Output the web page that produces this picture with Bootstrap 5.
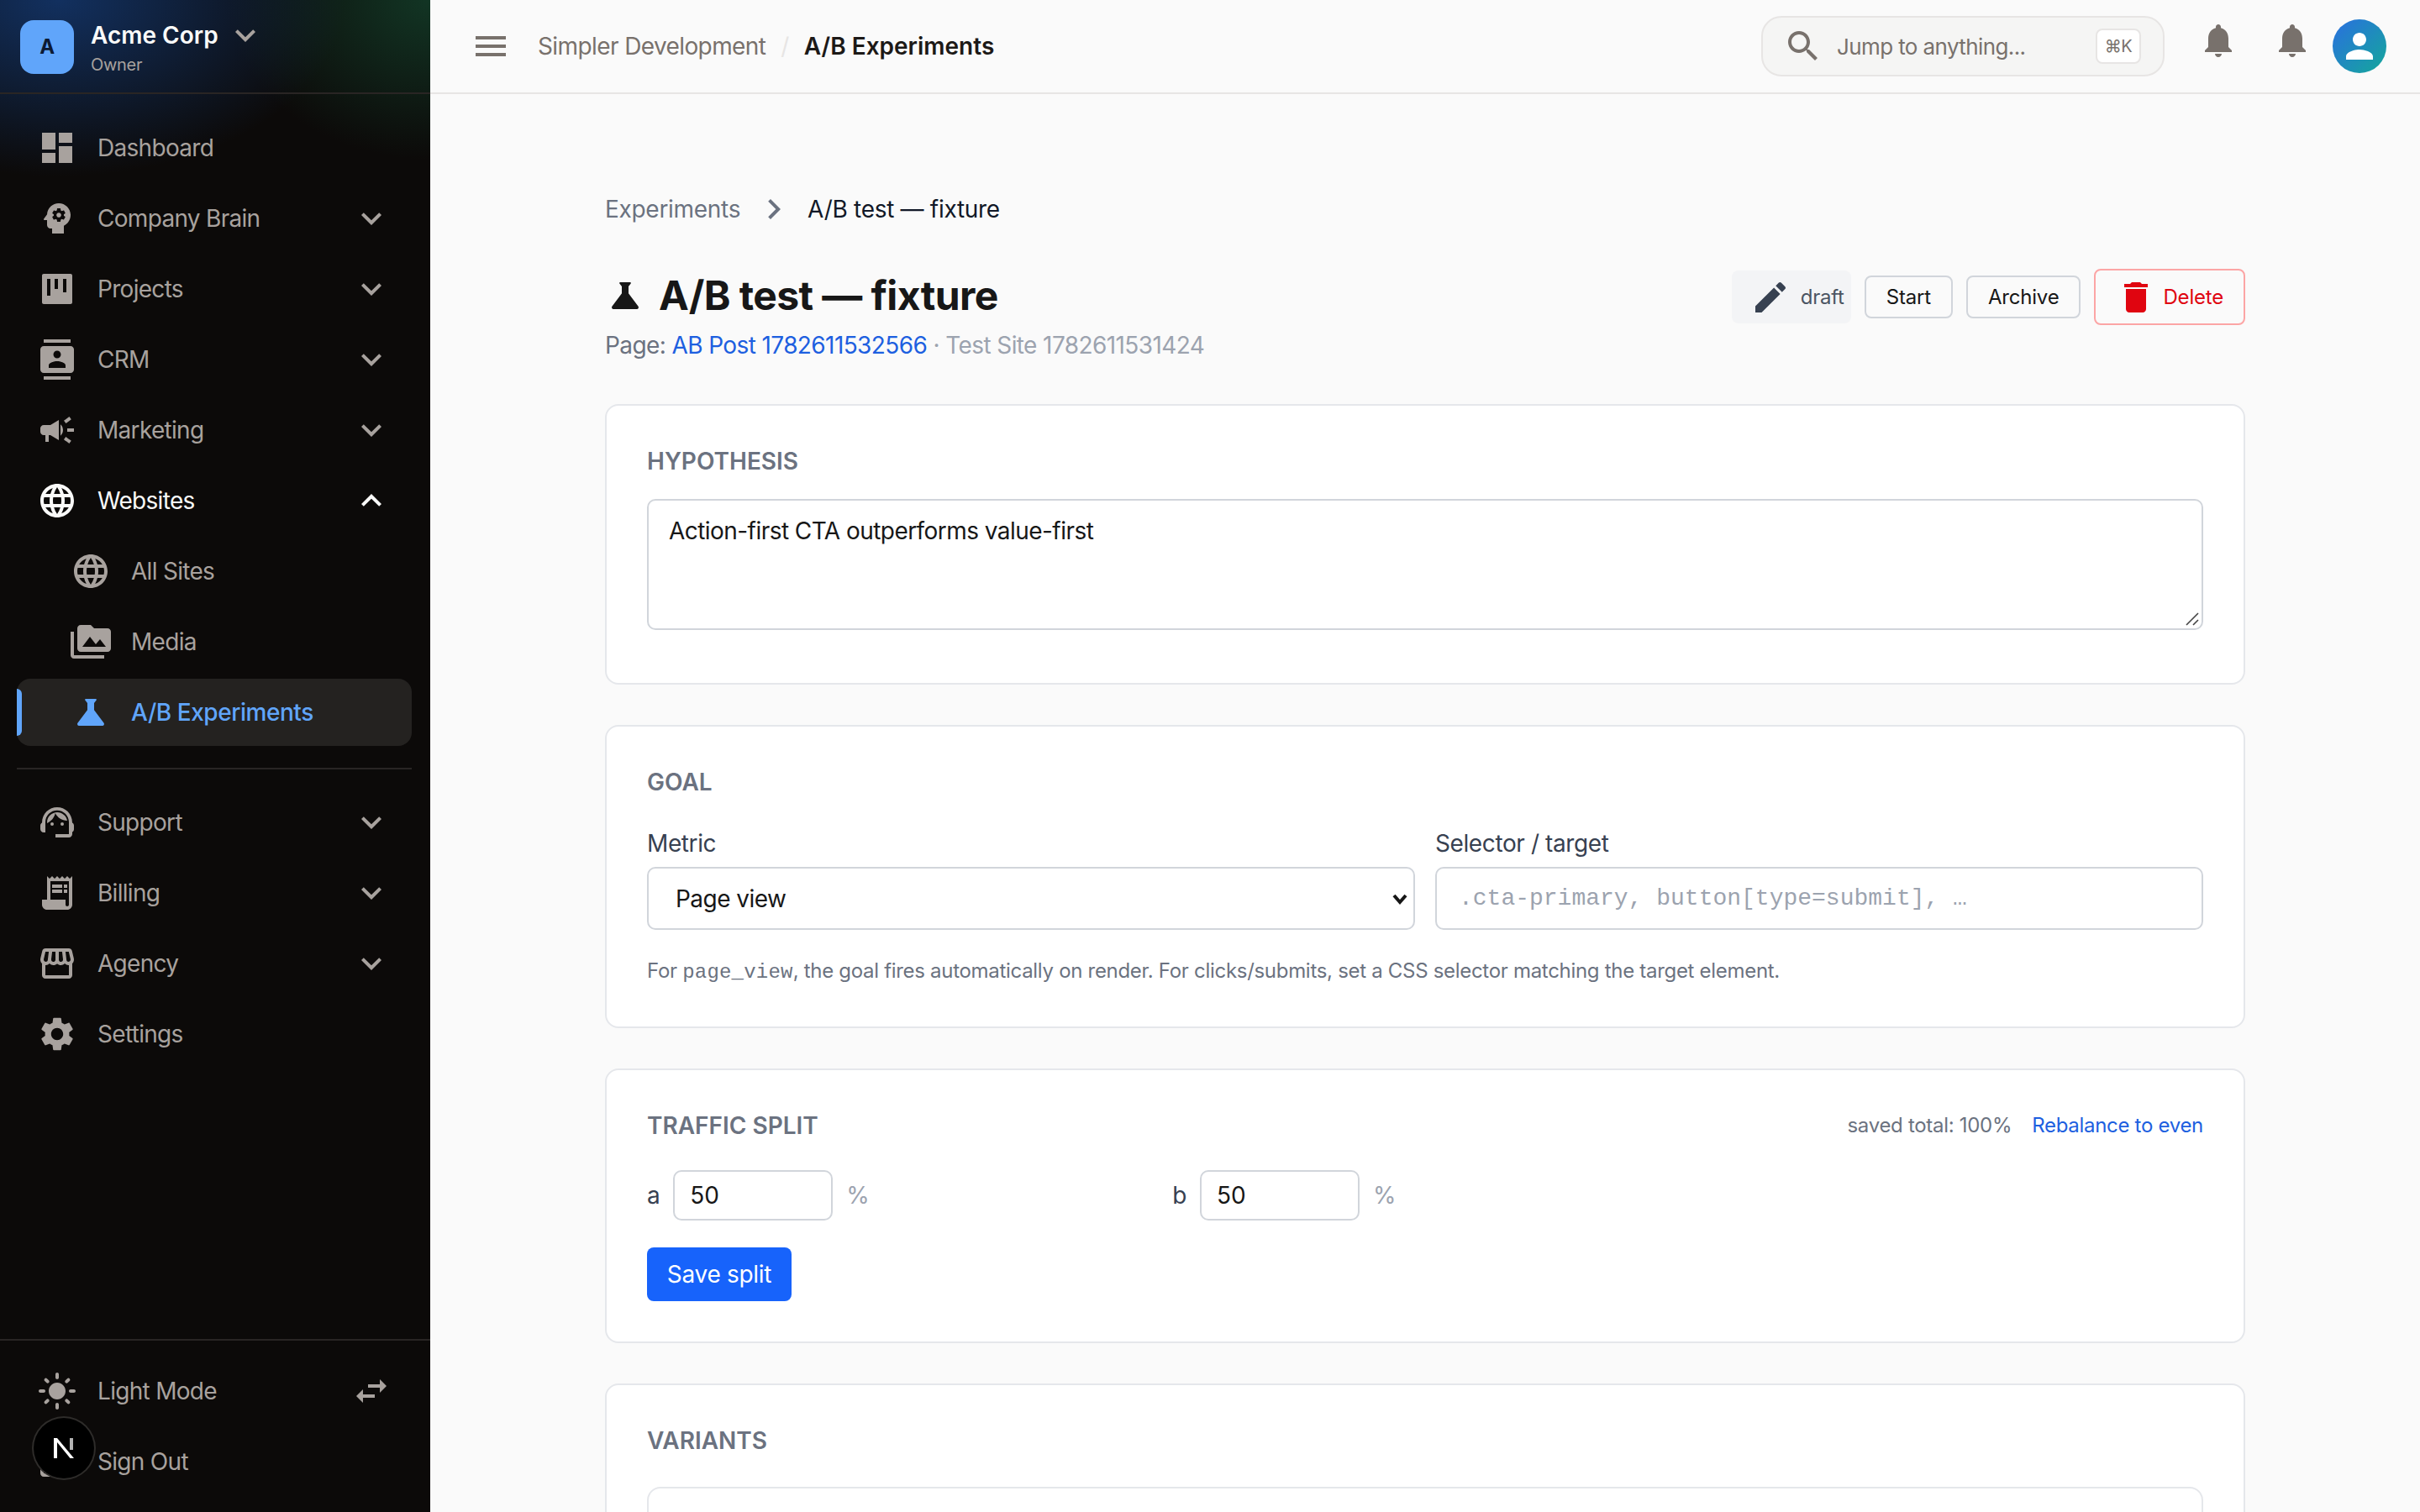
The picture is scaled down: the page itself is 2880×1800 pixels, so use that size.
<!DOCTYPE html>
<html lang="en">
<head>
    <meta charset="UTF-8">
    <meta name="viewport" content="width=device-width, initial-scale=1.0">
    <title>A/B Experiments</title>
    <link href="https://cdn.jsdelivr.net/npm/bootstrap@5.3.0/dist/css/bootstrap.min.css" rel="stylesheet">
    <style>
        html, body { height: 100%; }
        body { font-family: Inter, "Liberation Sans", sans-serif; font-size: 28px; letter-spacing: -.6px; background: #fafafa; color: #1c1917; overflow: hidden; }
        .ico { width: 48px; height: 48px; fill: currentColor; flex: none; }

        /* sidebar */
        .side { width: 512px; height: 1800px; flex: none; color: #a8a29e; position: relative;
            background: radial-gradient(ellipse 340px 210px at 70px 0, #12305f 0%, rgba(18,48,95,0) 100%), radial-gradient(ellipse 240px 190px at 512px 0, #123524 0%, rgba(18,53,36,0) 100%), #0c0a09; }
        .side-head { height: 112px; padding: 24px 24px 0; gap: 20px; border-bottom: 2px solid #292524; }
        .org-text { margin-top: -6px; }
        .org-mark { width: 64px; height: 64px; border-radius: 16px; background: #60a5fa; color: #0c1a33; font-size: 24px; font-weight: 700; }
        .org-name { font-size: 28px; font-weight: 600; color: #fafaf9; line-height: 36px; letter-spacing: 0; }
        .org-role { font-size: 20px; color: #a8a29e; line-height: 30px; margin-top: -4px; letter-spacing: -.3px; }
        .side-nav { padding: 24px 22px 0 20px; gap: 4px; }
        .side-link { height: 80px; padding: 0 24px; gap: 24px; border-radius: 16px; color: #a8a29e; position: relative; letter-spacing: -.7px; }
        .side-link:hover { color: #a8a29e; }
        .side-link.is-open { color: #fafaf9; }
        .side-link.is-sub { padding-left: 64px; }
        .side-link.is-current { background: #242220; color: #60a5fa; font-weight: 500; letter-spacing: -.45px; }
        .side-link.is-current::before { content: ""; position: absolute; left: 0; top: 12px; width: 6px; height: 56px; background: #60a5fa; border-radius: 0 6px 6px 0; }
        .side-rule { border-top: 2px solid #292524; margin: 22px 0 19px; }
        .side-foot { position: absolute; left: 0; right: 0; top: 1594px; border-top: 2px solid #292524; padding: 20px 22px 0 20px; gap: 4px; }
        .next-mark { position: absolute; left: 40px; top: 1688px; width: 72px; height: 72px; border-radius: 50%; background: #000; box-shadow: 0 0 0 2px #2e2c2a; }

        /* top bar */
        .top { height: 112px; border-bottom: 2px solid #e7e5e4; padding: 0 40px 0 48px; background: #fafafa; flex: none; }
        .crumb-a { color: #78716c; margin-left: 32px; }
        .crumb-sep { color: #e7e5e4; margin: 0 18px; }
        .crumb-b { font-weight: 600; color: #1c1917; letter-spacing: 0; }
        .jump { width: 480px; height: 72px; border: 2px solid #e7e5e4; border-radius: 24px; background: #f5f5f4; padding: 0 26px 0 24px; color: #78716c; font-size: 26px; gap: 16px; }
        .jump-key { width: 54px; height: 42px; background: #fff; border: 2px solid #e7e5e4; border-radius: 8px; font-size: 20px; }
        .bell { color: #78716c; }
        .bell-up { margin: 0 0 14px 40px; }
        .me { width: 64px; height: 64px; border-radius: 50%; background: linear-gradient(135deg, #2a6fe0, #14a89a); color: #fff; margin-left: 24px; }

        /* page */
        .page { width: 1952px; margin: 0 auto; padding-top: 113px; }
        .trail { line-height: 42px; color: #6b7280; letter-spacing: -.3px; }
        .trail-on { color: #111827; }
        .trail .ico { margin: 0 16px; }
        .exp-title { font-size: 48px; font-weight: 700; line-height: 64px; margin: 0; gap: 16px; color: #171717; letter-spacing: -.6px; }
        .exp-sub { line-height: 42px; color: #6b7280; margin-top: 6px; }
        .blue-link { color: #1d5fe0; text-decoration: none; }
        .faint { color: #9ca3af; }
        .head-row { margin-top: 47px; margin-bottom: 49px; }
        .state-tag { width: 142px; height: 63px; background: #f3f4f6; border-radius: 8px; font-size: 24px; color: #4b5563; padding-left: 22px; gap: 12px; letter-spacing: -.3px; }
        .state-tag .ico { color: #374151; }
        .act-btn { height: 51px; padding: 0 24px; font-size: 24px; letter-spacing: -.2px; border: 2px solid #d1d5db; border-radius: 8px; background: transparent; color: #171717; }
        .act-del { height: 67px; padding: 0 24px 0 24px; gap: 8px; border-color: #fca5a5; color: #e00510; }

        .panel { background: #fff; border: 2px solid #e5e7eb; border-radius: 16px; padding: 48px; margin-bottom: 48px; }
        .panel-label { font-size: 28px; font-weight: 600; line-height: 36px; letter-spacing: 0; color: #6b7280; text-transform: uppercase; margin: 0; }
        .field { border: 2px solid #d1d5db; border-radius: 10px; font-size: 28px; letter-spacing: -.55px; color: #171717; background-color: #fff; }
        .field:focus { border-color: #d1d5db; box-shadow: none; }
        .hyp-box { height: 156px; padding: 15px 24px; margin-top: 27px; display: block; margin-bottom: 15px; resize: none;
            background: url("data:image/svg+xml,%3csvg xmlns='http://www.w3.org/2000/svg' viewBox='0 0 16 16'%3e%3cpath stroke='%23444' stroke-width='1.600' d='M1 15L15 1M9 15l6-6'/%3e%3c/svg%3e") no-repeat right 3px bottom 3px / 16px 16px; }
        .field-cap { line-height: 42px; color: #374151; margin: 0 0 7px; display: block; font-size: 28px; letter-spacing: -.4px; }
        .metric-sel { height: 75px; padding: 0 32px; background-size: 24px 24px; background-position: right 4px center; background-image: url("data:image/svg+xml,%3csvg xmlns='http://www.w3.org/2000/svg' viewBox='0 0 24 24'%3e%3cpath fill='none' stroke='%23171717' stroke-width='4' d='M5 8l7 8 7-8'/%3e%3c/svg%3e"); }
        .sel-input { height: 75px; padding: 0 26px; font-family: "Liberation Mono", "DejaVu Sans Mono", monospace; font-size: 28px; letter-spacing: 0; }
        .sel-input::placeholder { color: #9ca3af; }
        .goal-grid { margin-top: 34px; }
        .help-line { font-size: 24px; line-height: 36px; letter-spacing: -.3px; color: #6b7280; margin: 31px 0 -2px; }
        .help-line code { font-family: "Liberation Mono", "DejaVu Sans Mono", monospace; color: inherit; font-size: 24px; letter-spacing: .2px; }
        .split-meta { font-size: 24px; color: #6b7280; gap: 24px; letter-spacing: -.3px; }
        .split-grid { margin-top: 35px; }
        .split-cell { gap: 16px; color: #374151; }
        .split-input { width: 190px; height: 60px; padding: 0 18px; letter-spacing: 0; }
        .save-btn { width: 172px; height: 64px; margin-top: 32px; font-size: 28px; padding: 0; letter-spacing: -.3px; background: #1763fb; border: 0; border-radius: 8px; display: block; }
        .var-box { height: 240px; border: 2px solid #e5e7eb; border-radius: 16px; margin-top: 37px; }
    </style>
</head>
<body>
    <svg width="0" height="0" class="position-absolute">
        <symbol id="i-dashboard" viewBox="0 0 24 24"><path d="M3 13h8V3H3v10zm0 8h8v-6H3v6zm10 0h8V11h-8v10zm0-18v6h8V3h-8z"/></symbol>
        <symbol id="i-brain" viewBox="0 0 24 24"><path d="M13 8.57c-.79 0-1.43.64-1.43 1.43s.64 1.43 1.43 1.43 1.43-.64 1.43-1.43-.64-1.43-1.43-1.43z"/><path d="M13 3C9.25 3 6.2 5.94 6.02 9.64L4.1 12.2c-.25.33-.01.8.4.8H6v3c0 1.1.9 2 2 2h1v3h7v-4.68c2.36-1.12 4-3.53 4-6.32 0-3.87-3.13-7-7-7zm3 7c0 .13-.01.26-.03.38l.83.66c.07.06.1.16.04.24l-.8 1.39c-.05.09-.15.12-.24.09l-.99-.4c-.21.16-.43.29-.67.39L14 13.83c-.01.1-.1.17-.2.17h-1.6c-.1 0-.18-.07-.2-.17l-.15-1.06c-.25-.1-.47-.23-.68-.39l-.99.4c-.09.03-.2 0-.25-.09l-.8-1.39c-.05-.08-.03-.18.04-.24l.84-.66c-.02-.12-.03-.25-.03-.38 0-.13.02-.26.04-.38l-.84-.66c-.07-.06-.09-.16-.04-.24l.8-1.39c.05-.09.15-.12.24-.09l.99.4c.21-.16.43-.29.68-.39L12 6.17c.02-.1.1-.17.2-.17h1.6c.1 0 .18.07.2.17l.15 1.06c.24.1.46.23.67.39l.99-.4c.09-.03.2 0 .24.09l.8 1.39c.05.08.03.18-.04.24l-.83.66c.02.12.02.25.02.38z"/></symbol>
        <symbol id="i-kanban" viewBox="0 0 24 24"><path fill-rule="evenodd" d="M4 3h16c.55 0 1 .45 1 1v16c0 .55-.45 1-1 1H4c-.55 0-1-.45-1-1V4c0-.55.45-1 1-1zm2 3v10h2V6H6zm4.500 0v6h2V6h-2zm5 0v8h2V6h-2z"/></symbol>
        <symbol id="i-contacts" viewBox="0 0 24 24"><path d="M20 0H4v2h16V0zM4 24h16v-2H4v2zM20 4H4c-1.1 0-2 .9-2 2v12c0 1.100.9 2 2 2h16c1.100 0 2-.9 2-2V6c0-1.100-.9-2-2-2zm-8 2.750c1.240 0 2.250 1.010 2.250 2.250s-1.010 2.250-2.250 2.250S9.750 10.240 9.750 9 10.760 6.750 12 6.750zM17 17H7v-1.500c0-1.670 3.330-2.500 5-2.500s5 .83 5 2.500V17z"/></symbol>
        <symbol id="i-campaign" viewBox="0 0 24 24"><path d="M18 11v2h4v-2h-4zm-2 6.610c.96.71 2.210 1.650 3.200 2.390.4-.53.8-1.070 1.200-1.600-.99-.74-2.240-1.680-3.200-2.400-.4.54-.8 1.080-1.200 1.610zM20.400 5.600c-.4-.53-.8-1.070-1.200-1.600-.99.74-2.240 1.680-3.200 2.400.4.53.8 1.070 1.200 1.600.96-.72 2.210-1.650 3.200-2.400zM4 9c-1.100 0-2 .9-2 2v2c0 1.100.9 2 2 2h1v4h2v-4h1l5 3V6L8 9H4zm11.500 3c0-1.330-.58-2.530-1.500-3.350v6.690c.92-.81 1.500-2.010 1.500-3.340z"/></symbol>
        <symbol id="i-globe" viewBox="0 0 24 24"><path d="M11.990 2C6.470 2 2 6.480 2 12s4.470 10 9.990 10C17.520 22 22 17.520 22 12S17.520 2 11.990 2zm6.930 6h-2.950c-.32-1.250-.78-2.450-1.380-3.560 1.840.63 3.370 1.910 4.330 3.560zM12 4.040c.83 1.200 1.480 2.530 1.910 3.960h-3.820c.43-1.430 1.080-2.760 1.910-3.960zM4.260 14C4.100 13.360 4 12.690 4 12s.1-1.360.26-2h3.380c-.08.66-.14 1.320-.14 2 0 .68.06 1.340.14 2H4.260zm.82 2h2.950c.32 1.250.78 2.450 1.380 3.560-1.840-.63-3.370-1.900-4.330-3.560zm2.950-8H5.080c.96-1.660 2.490-2.930 4.330-3.560C8.810 5.550 8.350 6.750 8.030 8zM12 19.960c-.83-1.200-1.480-2.530-1.910-3.960h3.820c-.43 1.430-1.080 2.760-1.910 3.960zM14.340 14H9.660c-.09-.66-.16-1.320-.16-2 0-.68.07-1.350.16-2h4.680c.09.65.16 1.320.16 2 0 .68-.07 1.340-.16 2zm.25 5.560c.6-1.110 1.060-2.310 1.380-3.560h2.950c-.96 1.650-2.490 2.930-4.330 3.560zM16.360 14c.08-.66.14-1.320.14-2 0-.68-.06-1.340-.14-2h3.380c.16.64.26 1.310.26 2s-.1 1.360-.26 2h-3.380z"/></symbol>
        <symbol id="i-media" viewBox="0 0 24 24"><path d="M2 6H0v5h.01L0 20c0 1.100.9 2 2 2h18v-2H2V6zm20-2h-8l-2-2H6c-1.100 0-1.990.9-1.990 2L4 16c0 1.100.9 2 2 2h16c1.100 0 2-.9 2-2V6c0-1.100-.9-2-2-2zM7 15l4.500-6 3.500 4.510 2.500-3.010L21 15H7z"/></symbol>
        <symbol id="i-flask" viewBox="0 0 24 24"><path d="M19.800 18.400L14 10.670V6.500l1.350-1.690c.26-.33.03-.81-.39-.81H9.040c-.42 0-.65.48-.39.81L10 6.500v4.170L4.200 18.400c-.49.66-.02 1.600.8 1.600h14c.82 0 1.290-.94.8-1.600z"/></symbol>
        <symbol id="i-agent" viewBox="0 0 24 24"><path d="M21 12.220C21 6.730 16.740 3 12 3c-4.690 0-9 3.650-9 9.280-.6.34-1 .98-1 1.720v2c0 1.100.9 2 2 2h1v-6.100c0-3.870 3.130-7 7-7s7 3.130 7 7V19h-8v2h8c1.100 0 2-.9 2-2v-1.220c.59-.31 1-.92 1-1.640v-2.300c0-.7-.41-1.310-1-1.620z"/><circle cx="9" cy="13" r="1"/><circle cx="15" cy="13" r="1"/><path d="M18 11.030C17.520 8.180 15.040 6 12.050 6c-3.030 0-6.290 2.510-6.030 6.450 2.470-1.010 4.330-3.210 4.860-5.890 1.310 2.630 4 4.440 7.120 4.470z"/></symbol>
        <symbol id="i-receipt" viewBox="0 0 24 24"><path d="M19.500 3.500L18 2l-1.500 1.500L15 2l-1.500 1.500L12 2l-1.500 1.500L9 2 7.500 3.500 6 2v14H3v3c0 1.660 1.340 3 3 3h12c1.660 0 3-1.340 3-3V2l-1.500 1.500zM19 19c0 .55-.45 1-1 1s-1-.45-1-1v-3H8V5h11v14z"/><path d="M9 7h6v2H9zM16 7h2v2h-2zM9 10h6v2H9zM16 10h2v2h-2z"/></symbol>
        <symbol id="i-store" viewBox="0 0 24 24"><path d="M21.900 8.890l-1.050-4.370c-.22-.9-1-1.520-1.910-1.520H5.050c-.9 0-1.690.63-1.900 1.520L2.100 8.890c-.24 1.020-.02 2.060.62 2.880.08.11.19.19.28.29V19c0 1.100.9 2 2 2h14c1.100 0 2-.9 2-2v-6.940c.09-.09.2-.18.28-.28.64-.82.87-1.870.62-2.890zm-2.990-3.900l1.050 4.370c.1.42.01.84-.25 1.170-.14.18-.44.47-.94.47-.61 0-1.140-.49-1.210-1.140L16.980 5l1.930-.01zM13 5h1.960l.54 4.520c.05.39-.07.78-.33 1.070-.22.26-.54.41-.95.41-.67 0-1.220-.59-1.220-1.310V5zM8.490 9.520L9.040 5H11v4.690c0 .72-.55 1.310-1.290 1.310-.34 0-.65-.15-.89-.41-.25-.29-.37-.68-.33-1.070zm-4.450-.16L5.050 5h1.970l-.58 4.860c-.08.65-.6 1.140-1.210 1.140-.49 0-.8-.29-.93-.47-.27-.32-.36-.75-.26-1.170zM5 19v-6.030c.08.01.15.03.23.03.87 0 1.660-.36 2.240-.95.6.6 1.400.95 2.310.95.87 0 1.650-.36 2.230-.93.59.57 1.390.93 2.290.93.84 0 1.640-.35 2.240-.95.58.59 1.370.95 2.240.95.08 0 .15-.02.23-.03V19H5z"/></symbol>
        <symbol id="i-gear" viewBox="0 0 24 24"><path d="M19.140 12.940c.04-.3.06-.61.06-.94 0-.32-.02-.64-.07-.94l2.030-1.580c.18-.14.23-.41.12-.61l-1.920-3.320c-.12-.22-.37-.29-.59-.22l-2.390.96c-.5-.38-1.030-.7-1.620-.94l-.36-2.540c-.04-.24-.24-.41-.48-.41h-3.840c-.24 0-.43.17-.47.41l-.36 2.540c-.59.24-1.130.57-1.620.94l-2.390-.96c-.22-.08-.47 0-.59.22L2.740 8.870c-.12.21-.08.47.12.61l2.030 1.580c-.05.3-.09.63-.09.94s.02.64.07.94l-2.030 1.580c-.18.14-.23.41-.12.61l1.920 3.320c.12.22.37.29.59.22l2.390-.96c.5.38 1.030.7 1.620.94l.36 2.540c.05.24.24.41.48.41h3.840c.24 0 .44-.17.47-.41l.36-2.540c.59-.24 1.130-.56 1.620-.94l2.390.96c.22.08.47 0 .59-.22l1.920-3.320c.12-.22.07-.47-.12-.61l-2.010-1.580zM12 15.600c-1.980 0-3.600-1.620-3.600-3.600s1.620-3.600 3.600-3.600 3.600 1.620 3.600 3.600-1.620 3.600-3.600 3.600z"/></symbol>
        <symbol id="i-sun" viewBox="0 0 24 24"><path d="M12 7c-2.760 0-5 2.240-5 5s2.240 5 5 5 5-2.240 5-5-2.240-5-5-5zM2 13h2c.55 0 1-.45 1-1s-.45-1-1-1H2c-.55 0-1 .45-1 1s.45 1 1 1zm18 0h2c.55 0 1-.45 1-1s-.45-1-1-1h-2c-.55 0-1 .45-1 1s.45 1 1 1zM11 2v2c0 .55.45 1 1 1s1-.45 1-1V2c0-.55-.45-1-1-1s-1 .45-1 1zm0 18v2c0 .55.45 1 1 1s1-.45 1-1v-2c0-.55-.45-1-1-1s-1 .45-1 1zM5.990 4.580c-.39-.39-1.030-.39-1.410 0-.39.39-.39 1.030 0 1.410l1.060 1.060c.39.39 1.030.39 1.410 0s.39-1.030 0-1.410L5.990 4.580zm12.370 12.370c-.39-.39-1.030-.39-1.410 0-.39.39-.39 1.030 0 1.410l1.060 1.060c.39.39 1.030.39 1.410 0 .39-.39.39-1.030 0-1.410l-1.060-1.060zm1.060-10.960c.39-.39.39-1.030 0-1.410-.39-.39-1.030-.39-1.410 0l-1.060 1.060c-.39.39-.39 1.030 0 1.410s1.030.39 1.410 0l1.060-1.060zM7.050 18.360c.39-.39.39-1.030 0-1.410-.39-.39-1.030-.39-1.410 0l-1.060 1.060c-.39.39-.39 1.030 0 1.410s1.030.39 1.410 0l1.060-1.060z"/></symbol>
        <symbol id="i-swap" viewBox="0 0 24 24"><path d="M6.990 11L3 15l3.990 4v-3H14v-2H6.990v-3zM21 9l-3.990-4v3H10v2h7.010v3L21 9z"/></symbol>
        <symbol id="i-logout" viewBox="0 0 24 24"><path d="M17 7l-1.410 1.410L18.170 11H8v2h10.170l-2.580 2.580L17 17l5-5zM4 5h8V3H4c-1.100 0-2 .9-2 2v14c0 1.100.9 2 2 2h8v-2H4V5z"/></symbol>
        <symbol id="i-bell" viewBox="0 0 24 24"><path d="M12 22c1.100 0 2-.9 2-2h-4c0 1.100.89 2 2 2zm6-6v-5c0-3.070-1.640-5.640-4.500-6.320V4c0-.83-.67-1.500-1.500-1.500s-1.500.67-1.500 1.500v.68C7.630 5.360 6 7.920 6 11v5l-2 2v1h16v-1l-2-2z"/></symbol>
        <symbol id="i-search" viewBox="0 0 24 24"><path d="M15.500 14h-.79l-.28-.27C15.410 12.590 16 11.110 16 9.500 16 5.910 13.090 3 9.500 3S3 5.910 3 9.500 5.910 16 9.500 16c1.610 0 3.090-.59 4.230-1.570l.27.28v.79l5 4.990L20.490 19l-4.990-5zm-6 0C7.010 14 5 11.990 5 9.500S7.010 5 9.500 5 14 7.010 14 9.500 11.990 14 9.500 14z"/></symbol>
        <symbol id="i-menu" viewBox="0 0 24 24"><path d="M3 18h18v-2H3v2zm0-5h18v-2H3v2zm0-7v2h18V6H3z"/></symbol>
        <symbol id="i-down" viewBox="0 0 24 24"><path d="M16.590 8.590L12 13.170 7.410 8.590 6 10l6 6 6-6z"/></symbol>
        <symbol id="i-up" viewBox="0 0 24 24"><path d="M12 8l-6 6 1.410 1.410L12 10.830l4.590 4.580L18 14z"/></symbol>
        <symbol id="i-right" viewBox="0 0 24 24"><path d="M10 6L8.590 7.410 13.170 12l-4.580 4.590L10 18l6-6z"/></symbol>
        <symbol id="i-edit" viewBox="0 0 24 24"><path d="M3 17.250V21h3.750L17.810 9.940l-3.750-3.750L3 17.250zM20.710 7.040c.39-.39.39-1.020 0-1.410l-2.340-2.340c-.39-.39-1.020-.39-1.410 0l-1.830 1.830 3.750 3.750 1.830-1.830z"/></symbol>
        <symbol id="i-trash" viewBox="0 0 24 24"><path d="M6 19c0 1.100.9 2 2 2h8c1.100 0 2-.9 2-2V7H6v12zM19 4h-3.500l-1-1h-5l-1 1H5v2h14V4z"/></symbol>
        <symbol id="i-person" viewBox="0 0 24 24"><path d="M12 12c2.210 0 4-1.790 4-4s-1.790-4-4-4-4 1.790-4 4 1.790 4 4 4zm0 2c-2.670 0-8 1.340-8 4v2h16v-2c0-2.660-5.330-4-8-4z"/></symbol>
    </svg>

    <div class="d-flex">
        <aside class="side">
            <div class="side-head d-flex">
                <div class="org-mark d-flex align-items-center justify-content-center">A</div>
                <div class="org-text">
                    <div class="d-flex align-items-center gap-2">
                        <span class="org-name">Acme Corp</span>
                        <svg class="ico"><use href="#i-down"/></svg>
                    </div>
                    <div class="org-role">Owner</div>
                </div>
            </div>
            <nav class="side-nav nav flex-column flex-nowrap">
                <a class="side-link nav-link d-flex align-items-center"><svg class="ico"><use href="#i-dashboard"/></svg>Dashboard</a>
                <a class="side-link nav-link d-flex align-items-center"><svg class="ico"><use href="#i-brain"/></svg><span class="flex-grow-1">Company Brain</span><svg class="ico"><use href="#i-down"/></svg></a>
                <a class="side-link nav-link d-flex align-items-center"><svg class="ico"><use href="#i-kanban"/></svg><span class="flex-grow-1">Projects</span><svg class="ico"><use href="#i-down"/></svg></a>
                <a class="side-link nav-link d-flex align-items-center"><svg class="ico"><use href="#i-contacts"/></svg><span class="flex-grow-1">CRM</span><svg class="ico"><use href="#i-down"/></svg></a>
                <a class="side-link nav-link d-flex align-items-center"><svg class="ico"><use href="#i-campaign"/></svg><span class="flex-grow-1">Marketing</span><svg class="ico"><use href="#i-down"/></svg></a>
                <a class="side-link nav-link is-open d-flex align-items-center"><svg class="ico"><use href="#i-globe"/></svg><span class="flex-grow-1">Websites</span><svg class="ico"><use href="#i-up"/></svg></a>
                <a class="side-link nav-link is-sub d-flex align-items-center"><svg class="ico"><use href="#i-globe"/></svg>All Sites</a>
                <a class="side-link nav-link is-sub d-flex align-items-center"><svg class="ico"><use href="#i-media"/></svg>Media</a>
                <a class="side-link nav-link is-sub is-current d-flex align-items-center"><svg class="ico"><use href="#i-flask"/></svg>A/B Experiments</a>
                <div class="side-rule"></div>
                <a class="side-link nav-link d-flex align-items-center"><svg class="ico"><use href="#i-agent"/></svg><span class="flex-grow-1">Support</span><svg class="ico"><use href="#i-down"/></svg></a>
                <a class="side-link nav-link d-flex align-items-center"><svg class="ico"><use href="#i-receipt"/></svg><span class="flex-grow-1">Billing</span><svg class="ico"><use href="#i-down"/></svg></a>
                <a class="side-link nav-link d-flex align-items-center"><svg class="ico"><use href="#i-store"/></svg><span class="flex-grow-1">Agency</span><svg class="ico"><use href="#i-down"/></svg></a>
                <a class="side-link nav-link d-flex align-items-center"><svg class="ico"><use href="#i-gear"/></svg>Settings</a>
            </nav>
            <div class="side-foot d-flex flex-column">
                <a class="side-link nav-link d-flex align-items-center"><svg class="ico"><use href="#i-sun"/></svg><span class="flex-grow-1">Light Mode</span><svg class="ico"><use href="#i-swap"/></svg></a>
                <a class="side-link nav-link d-flex align-items-center"><svg class="ico"><use href="#i-logout"/></svg>Sign Out</a>
            </div>
            <div class="next-mark d-flex align-items-center justify-content-center">
                <svg width="40" height="40" viewBox="0 0 40 40">
                    <path d="M8 8h4l20 24h-4.500L12 13v19H8z" fill="#fff"/>
                    <rect x="27" y="8" width="4" height="14" fill="#fff" opacity=".7"/>
                </svg>
            </div>
        </aside>

        <div class="flex-grow-1 d-flex flex-column">
            <header class="top d-flex align-items-center">
                <svg class="ico bell"><use href="#i-menu"/></svg>
                <span class="crumb-a">Simpler Development</span>
                <span class="crumb-sep">/</span>
                <span class="crumb-b">A/B Experiments</span>
                <div class="jump d-flex align-items-center ms-auto">
                    <svg class="ico"><use href="#i-search"/></svg>
                    <span class="flex-grow-1">Jump to anything...</span>
                    <span class="jump-key d-flex align-items-center justify-content-center">⌘K</span>
                </div>
                <svg class="ico bell bell-up"><use href="#i-bell"/></svg>
                <svg class="ico bell bell-up"><use href="#i-bell"/></svg>
                <div class="me d-flex align-items-center justify-content-center"><svg class="ico"><use href="#i-person"/></svg></div>
            </header>

            <main class="page">
                <div class="trail d-flex align-items-center">
                    <span>Experiments</span>
                    <svg class="ico"><use href="#i-right"/></svg>
                    <span class="trail-on">A/B test — fixture</span>
                </div>

                <div class="head-row d-flex justify-content-between align-items-start">
                    <div>
                        <h1 class="exp-title d-flex align-items-center"><svg class="ico"><use href="#i-flask"/></svg>A/B test — fixture</h1>
                        <div class="exp-sub">Page: <a class="blue-link">AB Post 1782611532566</a> <span class="faint">· Test Site 1782611531424</span></div>
                    </div>
                    <div class="d-flex align-items-center gap-3">
                        <span class="state-tag d-flex align-items-center"><svg class="ico"><use href="#i-edit"/></svg>draft</span>
                        <button type="button" class="btn act-btn">Start</button>
                        <button type="button" class="btn act-btn">Archive</button>
                        <button type="button" class="btn act-btn act-del d-flex align-items-center"><svg class="ico"><use href="#i-trash"/></svg>Delete</button>
                    </div>
                </div>

                <section class="panel">
                    <h2 class="panel-label">Hypothesis</h2>
                    <textarea class="form-control field hyp-box">Action-first CTA outperforms value-first</textarea>
                </section>

                <section class="panel">
                    <h2 class="panel-label">Goal</h2>
                    <div class="row gx-4 goal-grid">
                        <div class="col-6">
                            <label class="field-cap" for="metric">Metric</label>
                            <select class="form-select field metric-sel" id="metric"><option>Page view</option></select>
                        </div>
                        <div class="col-6">
                            <label class="field-cap" for="target">Selector / target</label>
                            <input class="form-control field sel-input" id="target" placeholder=".cta-primary, button[type=submit], …">
                        </div>
                    </div>
                    <p class="help-line">For <code>page_view</code>, the goal fires automatically on render. For clicks/submits, set a CSS selector matching the target element.</p>
                </section>

                <section class="panel">
                    <div class="d-flex justify-content-between align-items-center">
                        <h2 class="panel-label">Traffic split</h2>
                        <div class="split-meta d-flex">
                            <span>saved total: 100%</span>
                            <a class="blue-link">Rebalance to even</a>
                        </div>
                    </div>
                    <div class="row gx-4 split-grid">
                        <div class="col-4 d-flex align-items-center split-cell">a <input class="form-control field split-input" value="50"> <span class="faint">%</span></div>
                        <div class="col-4 d-flex align-items-center split-cell">b <input class="form-control field split-input" value="50"> <span class="faint">%</span></div>
                    </div>
                    <button type="button" class="btn btn-primary save-btn">Save split</button>
                </section>

                <section class="panel">
                    <h2 class="panel-label">Variants</h2>
                    <div class="var-box"></div>
                </section>
            </main>
        </div>
    </div>
    <script src="https://cdn.jsdelivr.net/npm/bootstrap@5.3.0/dist/js/bootstrap.bundle.min.js"></script>
</body>
</html>
